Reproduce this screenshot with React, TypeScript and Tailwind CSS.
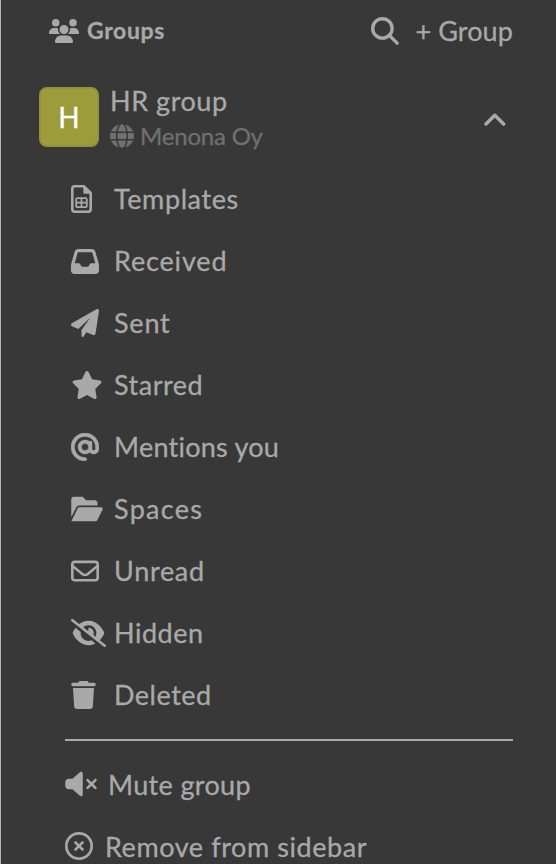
import type { ReactNode } from "react";
import {
  FaUsers,
  FaGlobe,
  FaStar,
  FaAt,
  FaRegEnvelope,
  FaEyeSlash,
  FaTrash,
  FaVolumeXmark,
  FaRegCircleXmark,
} from "react-icons/fa6";

function SearchIcon() {
  return (
    <svg className="h-7 w-7" viewBox="0 0 28 28" fill="none" stroke="currentColor" strokeWidth="3.4" strokeLinecap="round">
      <circle cx="11.4" cy="11.4" r="9.7" />
      <path d="M18.6 18.6 26.1 26.1" />
    </svg>
  );
}

function ChevronUpIcon() {
  return (
    <svg className="h-[14px] w-[22px]" viewBox="0 0 22 14" fill="none" stroke="currentColor" strokeWidth="3.5" strokeLinecap="round" strokeLinejoin="round">
      <path d="M2 11.1 10.8 2.3 19.6 11.1" />
    </svg>
  );
}

function SheetIcon() {
  return (
    <svg className="h-7 w-[21px]" viewBox="0 0 21 28" fill="none" stroke="currentColor">
      <path d="M3.6 1.3H13L19.7 8V24.3A2.4 2.4 0 0 1 17.3 26.7H3.6A2.4 2.4 0 0 1 1.3 24.3V3.7A2.4 2.4 0 0 1 3.6 1.3Z" strokeWidth="2.6" strokeLinejoin="round" />
      <path d="M12.3 1V7.2A1.5 1.5 0 0 0 13.8 8.7H20Z" fill="currentColor" stroke="none" />
      <path d="M6.4 13.2H14.6A1.2 1.2 0 0 1 15.8 14.4V20.9A1.2 1.2 0 0 1 14.6 22.1H6.4A1.2 1.2 0 0 1 5.2 20.9V14.4A1.2 1.2 0 0 1 6.4 13.2ZM10.5 13.2V22.1M5.2 17.6H15.8" strokeWidth="1.8" />
    </svg>
  );
}

function InboxIcon() {
  return (
    <svg className="h-[25px] w-7" viewBox="0 0 28 25" fill="currentColor">
      <path fillRule="evenodd" d="M7.2 0H20.8C22.5 0 23.9 1 24.3 2.6L27.7 14.4C27.9 15 28 15.7 28 16.4V21.5C28 23.4 26.5 25 24.6 25H3.4C1.5 25 0 23.4 0 21.5V16.4C0 15.7.1 15 .3 14.4L3.7 2.6C4.1 1 5.5 0 7.2 0ZM7.3 3.3C6.9 3.3 6.7 3.5 6.6 3.9L3.7 14.2H7.6C8.3 14.2 8.8 14.5 9.1 15.1L10.2 17.1C10.4 17.5 10.8 17.7 11.3 17.7H16.7C17.2 17.7 17.6 17.5 17.8 17.1L18.9 15.1C19.2 14.5 19.7 14.2 20.4 14.2H24.3L21.4 3.9C21.3 3.5 21.1 3.3 20.7 3.3Z" />
    </svg>
  );
}

function PlaneIcon() {
  return (
    <svg className="h-7 w-7" viewBox="0 0 512 512" fill="currentColor">
      <path d="M511.6 36.86l-64 415.1c-1.5 9.734-7.375 18.22-15.97 23.05c-4.844 2.719-10.27 4.097-15.68 4.097c-4.188 0-8.319-.8154-12.29-2.472l-122.6-51.1l-50.86 76.29C226.3 508.5 219.8 512 212.8 512C201.3 512 192 502.7 192 491.2v-96.18c0-7.115 2.372-14.03 6.742-19.64L352 162l-220 202L19.69 317.5C8.438 312.8 .8125 302.2 .0625 289.1s5.469-23.72 16.06-29.99l448-255.1c10.69-6.109 23.88-5.547 34 1.406S513.5 24.72 511.6 36.86z" />
    </svg>
  );
}

function FolderIcon() {
  return (
    <svg className="h-7 w-8" viewBox="0 0 576 512" fill="currentColor">
      <path d="M147.8 192H480V144C480 117.5 458.5 96 432 96h-160l-64-64h-160C21.49 32 0 53.49 0 80v328.4l90.54-181.1C101.4 205.6 123.4 192 147.8 192zM543.1 224H147.8C135.7 224 124.6 230.8 119.2 241.7L0 480h447.1c12.12 0 23.2-6.852 28.62-17.69l96-192C583.2 249 567.7 224 543.1 224z" />
    </svg>
  );
}

type Item = { label: string; icon: ReactNode; tracking: string };

const items: Item[] = [
  { label: "Templates", icon: <SheetIcon />, tracking: "tracking-[0.6px]" },
  { label: "Received", icon: <InboxIcon />, tracking: "tracking-[0.85px]" },
  { label: "Sent", icon: <PlaneIcon />, tracking: "tracking-[0.8px]" },
  { label: "Starred", icon: <FaStar className="h-7 w-8" />, tracking: "tracking-[0.5px]" },
  { label: "Mentions you", icon: <FaAt className="h-7 w-7" stroke="currentColor" strokeWidth="8" />, tracking: "tracking-[0.25px]" },
  { label: "Spaces", icon: <FolderIcon />, tracking: "tracking-[1.3px]" },
  { label: "Unread", icon: <FaRegEnvelope className="h-7 w-7" />, tracking: "tracking-[0.7px]" },
  { label: "Hidden", icon: <FaEyeSlash className="h-7 w-[35px]" />, tracking: "tracking-[0.5px]" },
  { label: "Deleted", icon: <FaTrash className="h-7 w-[25px]" />, tracking: "tracking-[0.5px]" },
];

export default function App() {
  return (
    <div className="h-[864px] w-[556px] overflow-hidden border-l border-[#b5b5b5] bg-[#383838] font-['Lato',sans-serif] text-[27px] leading-8 text-[#a9a9a9] [-webkit-text-stroke:0.3px]">
      <header className="flex h-[62px] items-center pl-12 pr-[43px]">
        <FaUsers className="h-6 w-[30px]" />
        <h1 className="-mt-0.5 ml-2 text-[23px] font-bold tracking-[0.65px]">Groups</h1>
        <button className="ml-auto flex items-center">
          <SearchIcon />
        </button>
        <button className="-mt-px ml-4 whitespace-nowrap tracking-[0.1px]">+ Group</button>
      </header>

      <section className="mt-[25px] flex h-[60px] pl-[38px] pr-[50px]">
        <div className="flex h-[60px] w-[60px] items-center justify-center rounded-lg border-2 border-[#93933a] bg-[#9c9c3d] text-[28px] text-white">H</div>
        <div className="ml-[11px] -mt-[2px] whitespace-nowrap">
          <h2 className="tracking-[0.55px]">HR group</h2>
          <p className="mt-[3px] flex items-center text-[24px] text-[#707070]">
            <FaGlobe className="mr-[6px] h-6 w-6" />
            <span className="tracking-[-0.2px]">Menona Oy</span>
          </p>
        </div>
        <button className="ml-auto mt-[26px] h-[14px]">
          <ChevronUpIcon />
        </button>
      </section>

      <nav className="mt-[21px]">
        {items.map((item) => (
          <a key={item.label} className="flex h-[62px] items-center pl-[70px]">
            <span className="flex w-[43px] shrink-0">{item.icon}</span>
            <span className={item.tracking}>{item.label}</span>
          </a>
        ))}
      </nav>

      <hr className="ml-16 mt-[13px] w-[448px] border-0 border-t-2 border-[#a9a9a9]" />

      <div className="mt-3">
        <a className="flex h-[62px] items-center pl-16">
          <FaVolumeXmark className="h-7 w-8" />
          <span className="ml-[11px] mt-px tracking-[0.35px]">Mute group</span>
        </a>
        <a className="flex h-[62px] items-center pl-16">
          <FaRegCircleXmark className="h-7 w-7" />
          <span className="ml-3 mt-px tracking-[0.57px]">Remove from sidebar</span>
        </a>
      </div>
    </div>
  );
}
